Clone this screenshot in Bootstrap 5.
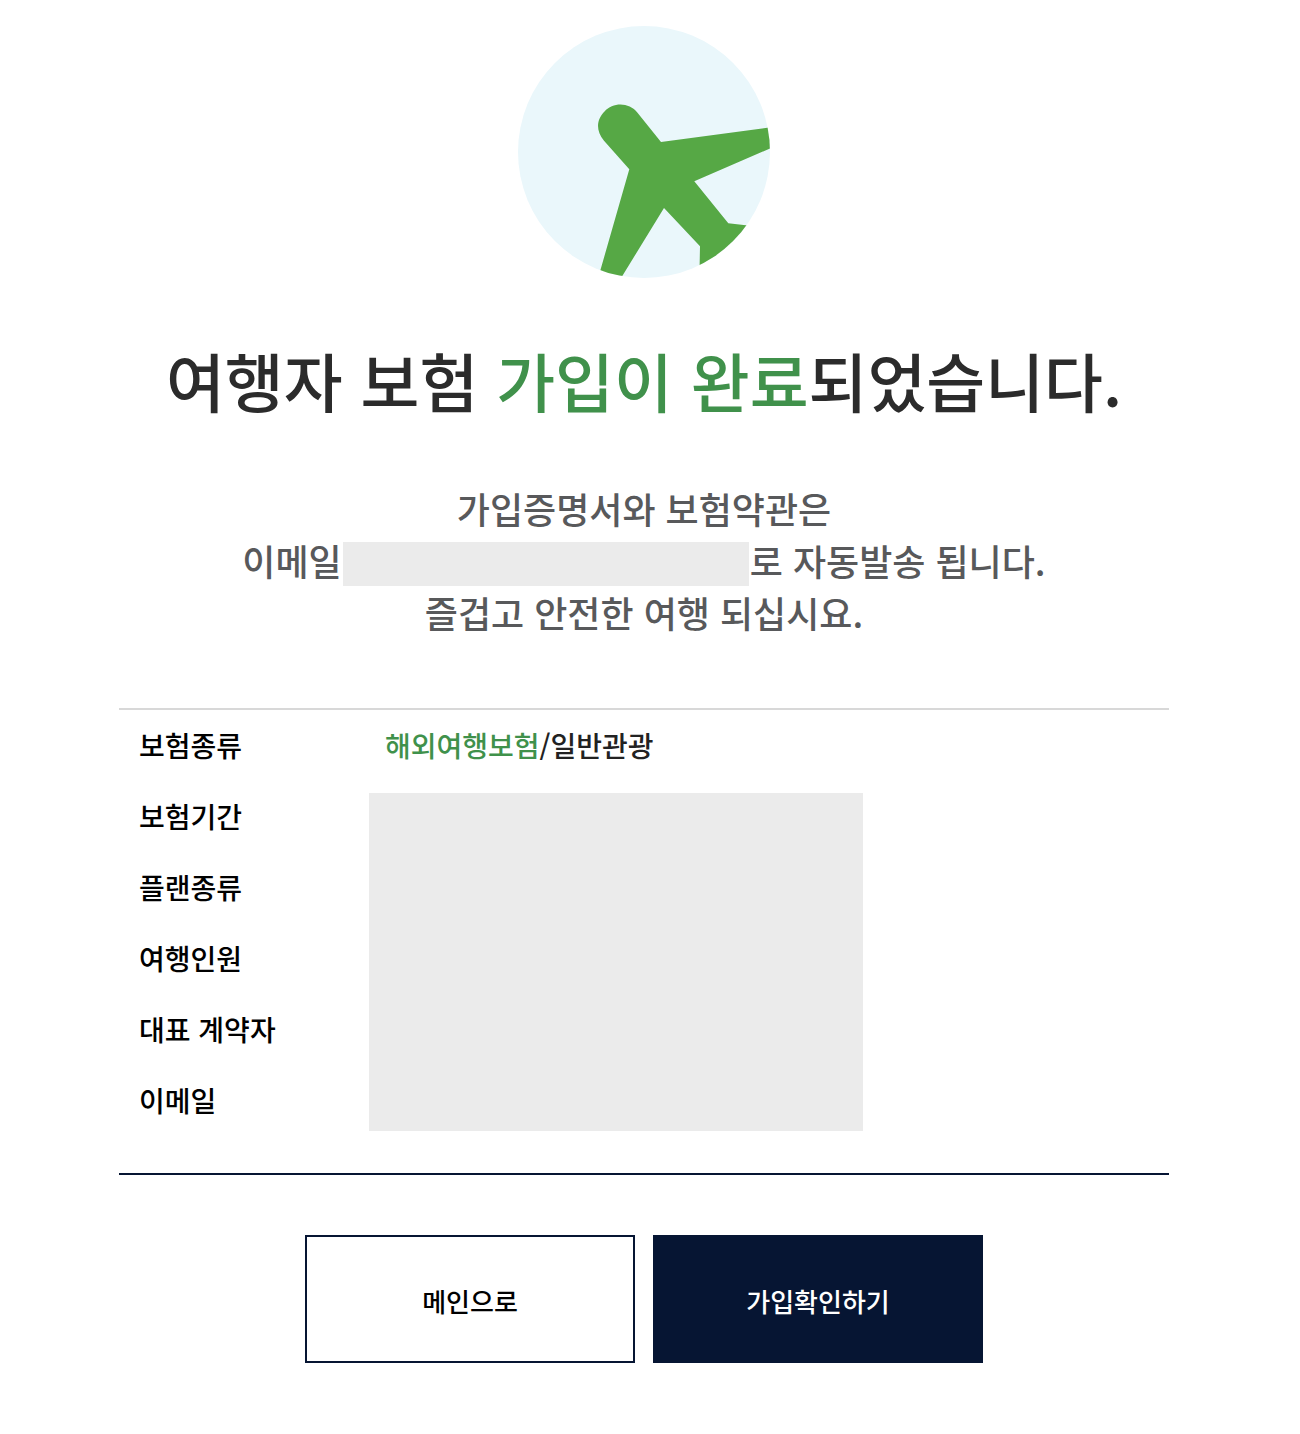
<!DOCTYPE html>
<html lang="ko">
<head>
<meta charset="utf-8">
<meta name="viewport" content="width=device-width, initial-scale=1">
<title>여행자 보험 가입 완료</title>
<link href="https://cdn.jsdelivr.net/npm/bootstrap@5.3.0/dist/css/bootstrap.min.css" rel="stylesheet">
<style>
  body { font-family: "Noto Sans CJK KR", sans-serif; font-weight: 500; color: #000; background: #fff; }
  .page-wrap { width: 1288px; height: 1434px; padding-top: 26px; }
  .plane-icon { width: 252px; height: 252px; }
  .done-title { font-size: 64px; line-height: 92px; margin-top: 55px; font-weight: 500; color: #2b2b2b; }
  .accent { color: #40914b; }
  .done-text { font-size: 36px; line-height: 52px; margin-top: 57px; color: #58595b; }
  .done-text > div { height: 52px; }
  .masked { background: #ebebeb; }
  .masked-mail { width: 406px; height: 44px; margin: 8px 1px 0 1px; }
  .summary { width: 1050px; height: 467px; margin-top: 70px; border-top: 2px solid #d8d8d8; border-bottom: 2px solid #061533; font-size: 28px; line-height: 71px; }
  .summary-labels { width: 250px; padding-left: 20px; }
  .summary-kind { height: 71px; padding-left: 16px; color: #222; }
  .masked-values { width: 494px; height: 338px; margin-top: 12px; }
  .actions { gap: 18px; margin-top: 60px; }
  .action-btn { width: 330px; height: 128px; font-size: 26px; font-weight: 500; border: 2px solid #061533; --bs-btn-color: #000; --bs-btn-hover-color: #000; padding: 2px 0 0; }
  .action-btn.filled { background: #061533; color: #fff; }
</style>
</head>
<body>
<main class="page-wrap d-flex flex-column align-items-center">
  <svg class="plane-icon flex-shrink-0" viewBox="518 26 252 252" role="img" aria-label="비행기">
    <defs><clipPath id="disc"><circle cx="644" cy="152" r="126"/></clipPath></defs>
    <circle cx="644" cy="152" r="126" fill="#eaf7fb"/>
    <path clip-path="url(#disc)" fill="#56a845" d="M604 140.7C595 130 597 119 604.5 111.500C613 102 629 102 637.500 112.700L661 142L767.300 127.700L773 127L773 147.200L694.300 181.300L728.300 223.300L748 225.500L760 280H699.300L700 246.300L664 208L622.300 276L618 283L597 282L629.300 169.300Z"/>
  </svg>
  <h1 class="done-title mb-0 text-nowrap">여행자 보험 <span class="accent">가입이 완료</span>되었습니다.</h1>
  <div class="done-text text-center text-nowrap">
    <div>가입증명서와 보험약관은</div>
    <div class="d-flex justify-content-center"><span>이메일</span><span class="masked masked-mail"></span><span>로 자동발송 됩니다.</span></div>
    <div>즐겁고 안전한 여행 되십시요.</div>
  </div>
  <section class="summary d-flex">
    <div class="summary-labels">
      <div>보험종류</div>
      <div>보험기간</div>
      <div>플랜종류</div>
      <div>여행인원</div>
      <div>대표 계약자</div>
      <div>이메일</div>
    </div>
    <div>
      <div class="summary-kind"><span class="accent">해외여행보험</span>/일반관광</div>
      <div class="masked masked-values"></div>
    </div>
  </section>
  <div class="actions d-flex">
    <button type="button" class="btn action-btn rounded-0">메인으로</button>
    <button type="button" class="btn action-btn filled rounded-0">가입확인하기</button>
  </div>
</main>
<script src="https://cdn.jsdelivr.net/npm/bootstrap@5.3.0/dist/js/bootstrap.bundle.min.js"></script>
</body>
</html>
